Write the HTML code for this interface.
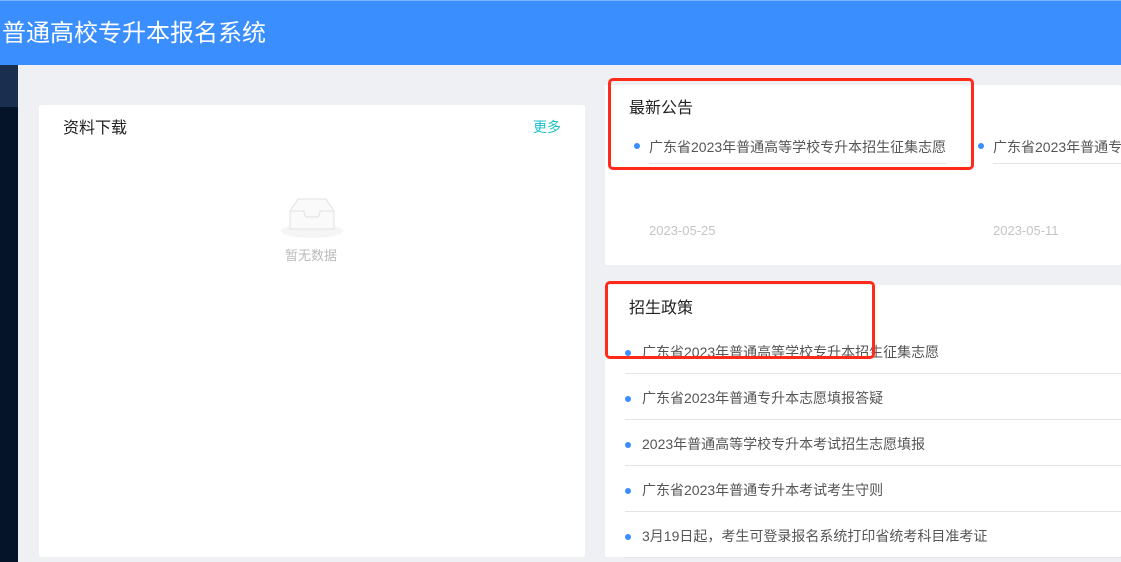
<!DOCTYPE html>
<html><head><meta charset="utf-8"><style>
*{margin:0;padding:0;box-sizing:border-box}
html{overflow:hidden}
body{width:1121px;height:562px;overflow:hidden;background:#eef0f4;font-family:"Liberation Sans","Noto Sans CJK SC",sans-serif;position:relative}
.a{position:absolute}
.hdr{left:0;top:0;width:1121px;height:65px;background:#3a8efd;border-top:1px solid #7fb3ff}
.hdr span{position:absolute;left:2px;top:17px;font-size:24px;color:#fff;line-height:32px}
.side{left:0;top:65px;width:18px;height:497px;background:#06142a}
.side2{left:0;top:65px;width:18px;height:42px;background:#1a2e50}
.card{background:#fff;border-radius:2px}
.t{font-size:16px;color:#222}
.dot{width:6px;height:6px;border-radius:50%;background:#3a8efd}
.li{font-size:14px;color:#555;white-space:nowrap}
.ln{height:1px;background:#e4e4e4}
.red{border:3px solid #ff2a1a;border-radius:5px}
.d{font-size:13px;color:#c4c4c4}
</style></head><body>
<div class="a hdr"><span>普通高校专升本报名系统</span></div>
<div class="a side"></div><div class="a side2"></div>

<div class="a card" style="left:39px;top:105px;width:546px;height:452px"></div>
<div class="a t" style="left:63px;top:114px">资料下载</div>
<div class="a" style="left:533px;top:117px;font-size:14px;color:#1ec0c8">更多</div>
<svg class="a" style="left:280px;top:193px" width="64" height="46" viewBox="0 0 64 46">
<ellipse cx="32" cy="38" rx="31" ry="7" fill="#f5f5f5"/>
<path d="M10 18 L18 6 H46 L54 18 V36 H10 Z" fill="#fafafa" stroke="#e2e2e2" stroke-width="1"/>
<path d="M10 18 H24 Q24 24 28 24 H36 Q40 24 40 18 H54" fill="none" stroke="#e2e2e2" stroke-width="1"/>
</svg>
<div class="a" style="left:285px;top:245px;font-size:13px;color:#bbb">暂无数据</div>

<div class="a card" style="left:605px;top:85px;width:516px;height:180px"></div>
<div class="a t" style="left:629px;top:94px">最新公告</div>
<div class="a dot" style="left:634px;top:143px"></div>
<div class="a li" style="left:649px;top:137px">广东省2023年普通高等学校专升本招生征集志愿</div>
<div class="a ln" style="left:649px;top:163px;width:297px"></div>
<div class="a d" style="left:649px;top:223px">2023-05-25</div>
<div class="a dot" style="left:978px;top:143px"></div>
<div class="a li" style="left:993px;top:137px;width:128px;overflow:hidden">广东省2023年普通专升本志愿填报答疑</div>
<div class="a ln" style="left:993px;top:163px;width:128px"></div>
<div class="a d" style="left:993px;top:223px">2023-05-11</div>

<div class="a card" style="left:605px;top:285px;width:516px;height:272px"></div>
<div class="a t" style="left:629px;top:294px">招生政策</div>
<div class="a dot" style="left:625px;top:350px"></div><div class="a li" style="left:642px;top:342px">广东省2023年普通高等学校专升本招生征集志愿</div><div class="a ln" style="left:625px;top:373px;width:496px"></div>
<div class="a dot" style="left:625px;top:396px"></div><div class="a li" style="left:642px;top:388px">广东省2023年普通专升本志愿填报答疑</div><div class="a ln" style="left:625px;top:419px;width:496px"></div>
<div class="a dot" style="left:625px;top:442px"></div><div class="a li" style="left:642px;top:434px">2023年普通高等学校专升本考试招生志愿填报</div><div class="a ln" style="left:625px;top:465px;width:496px"></div>
<div class="a dot" style="left:625px;top:488px"></div><div class="a li" style="left:642px;top:480px">广东省2023年普通专升本考试考生守则</div><div class="a ln" style="left:625px;top:511px;width:496px"></div>
<div class="a dot" style="left:625px;top:534px"></div><div class="a li" style="left:642px;top:526px">3月19日起，考生可登录报名系统打印省统考科目准考证</div><div class="a ln" style="left:625px;top:557px;width:496px"></div>

<div class="a red" style="left:608px;top:78px;width:366px;height:92px"></div>
<div class="a red" style="left:605px;top:281px;width:270px;height:78px"></div>
</body></html>
